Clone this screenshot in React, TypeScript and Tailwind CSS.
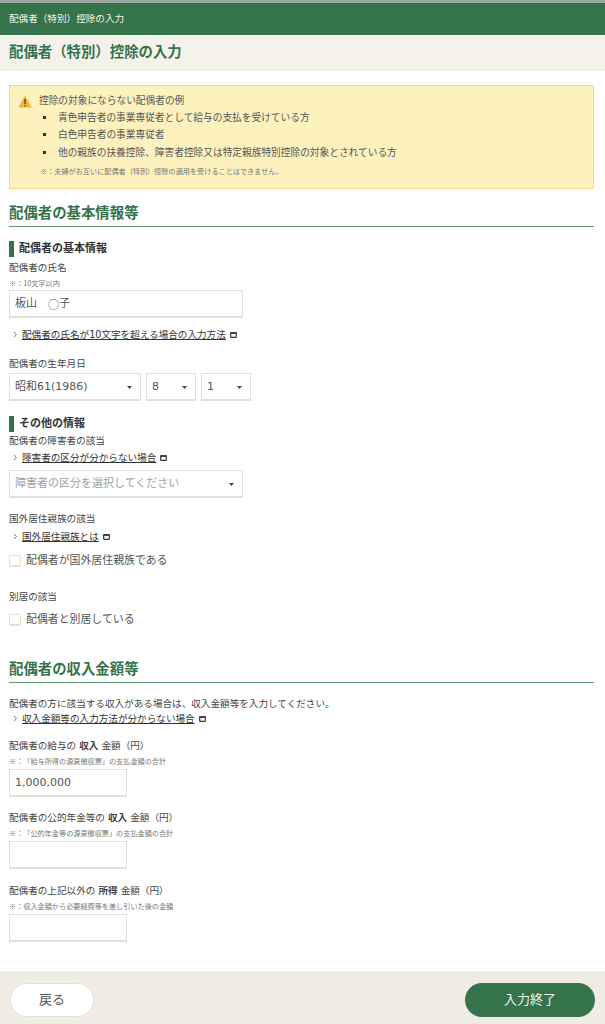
const FONT = "font-['DejaVu_Sans','Noto_Sans_CJK_JP',sans-serif]";

function ExternalIcon() {
  return (
    <svg width="7" height="6" viewBox="0 0 7 6" className="ml-[4px] inline-block">
      <rect x="0.7" y="0.9" width="5.6" height="4.4" rx="0.6" fill="none" stroke="#333" strokeWidth="1.2" />
      <rect x="0.3" y="0.3" width="6.4" height="1.5" fill="#333" />
    </svg>
  );
}

function HelpLink({ text, className }: { text: string; className?: string }) {
  return (
    <div className={`flex items-center h-[13px] text-[9.6px] leading-[13px] text-[#333] ${className ?? ""}`}>
      <svg width="5" height="7" viewBox="0 0 5 7" className="ml-[4px] mr-[4px]">
        <path d="M1 1l2.5 2.5L1 6" fill="none" stroke="#666" strokeWidth="0.9" />
      </svg>
      <span className="underline">{text}</span>
      <ExternalIcon />
    </div>
  );
}

function SectionTitle({ text, className }: { text: string; className?: string }) {
  return (
    <h2 className={`h-[24px] border-b border-[#5f9a72] text-[14.4px] leading-[20px] font-bold text-[#35734a] ${className ?? ""}`}>
      {text}
    </h2>
  );
}

function SubTitle({ text, className }: { text: string; className?: string }) {
  return (
    <h3 className={`h-[16px] border-l-[5px] border-[#35734a] pl-[5px] text-[11px] leading-[16px] font-bold text-[#333] ${className ?? ""}`}>
      {text}
    </h3>
  );
}

function Label({ children, className }: { children: React.ReactNode; className?: string }) {
  return <div className={`h-[13px] text-[9.6px] leading-[13px] text-[#444] ${className ?? ""}`}>{children}</div>;
}

function Note({ text, className }: { text: string; className?: string }) {
  return (
    <div className={`h-[10px] font-['Noto_Sans_CJK_JP',sans-serif] text-[7.15px] leading-[10px] text-[#777] [text-spacing-trim:space-all] ${className ?? ""}`}>
      {text}
    </div>
  );
}

function Field({ value, className }: { value?: React.ReactNode; className?: string }) {
  return (
    <div className={`h-[28px] flex items-center border border-[#e3e0d8] border-b-2 bg-white pl-[5px] pt-[1px] text-[11px] text-[#555] ${className ?? ""}`}>
      {value}
    </div>
  );
}

function SelectBox({ value, muted, className }: { value: string; muted?: boolean; className?: string }) {
  return (
    <div className={`h-[28px] flex items-center justify-between border border-[#e3e0d8] border-b-2 bg-white pl-[5px] pr-[8px] pt-[1px] text-[11px] ${muted ? "text-[#a0a0a0]" : "text-[#555]"} ${className ?? ""}`}>
      <span>{value}</span>
      <svg width="5" height="3" viewBox="0 0 5 3">
        <path d="M0 0h5L2.5 3z" fill="#444" />
      </svg>
    </div>
  );
}

function CheckRow({ text, className }: { text: string; className?: string }) {
  return (
    <div className={`flex items-center h-[14px] text-[10.9px] text-[#555] ${className ?? ""}`}>
      <span className="w-[12px] h-[12px] mr-[5px] rounded-[2px] border border-[#e3e0d8] border-b-2 bg-white" />
      {text}
    </div>
  );
}

const EXCLUDED = [
  "青色申告者の事業専従者として給与の支払を受けている方",
  "白色申告者の事業専従者",
  "他の親族の扶養控除、障害者控除又は特定親族特別控除の対象とされている方",
];

export default function App() {
  return (
    <div className={`w-[605px] h-[1024px] overflow-hidden flex flex-col bg-white ${FONT}`}>
      <div className="h-[3px] bg-[#9aa89f]" />
      <div className="h-[32px] pl-[9px] flex items-center bg-[#35734a] text-[9.6px] text-[#f2f2ec]">配偶者（特別）控除の入力</div>
      <div className="h-[36px] pl-[9px] flex items-center bg-[#f5f2eb] text-[14.4px] font-bold text-[#35734a]">配偶者（特別）控除の入力</div>

      <main className="flex-1 pl-[9px] pr-[11px]">
        <div className="mt-[14px] h-[104px] border border-[#fbd67f] bg-[#fdf1bd] pt-[7px] pl-[8px] text-[9.7px] leading-[17.3px] text-[#555]">
          <div className="flex items-center h-[16px]">
            <svg width="14" height="13" viewBox="0 0 14 13" className="mr-[7px]">
              <path d="M7 0.5L13.7 12.5H0.3z" fill="#f2b33d" />
              <rect x="6.3" y="4" width="1.4" height="5" fill="#5a4a1a" />
              <rect x="6.3" y="10" width="1.4" height="1.4" fill="#5a4a1a" />
            </svg>
            控除の対象にならない配偶者の例
          </div>
          <ul className="ml-[25px]">
            {EXCLUDED.map((item) => (
              <li key={item} className="flex items-center">
                <span className="w-[3px] h-[3px] mr-[12px] bg-[#333]" />
                {item}
              </li>
            ))}
          </ul>
          <div className="ml-[22px] mt-[5px] font-['Noto_Sans_CJK_JP',sans-serif] text-[7.15px] leading-[10px] text-[#777]">※：夫婦がお互いに配偶者（特別）控除の適用を受けることはできません。</div>
        </div>

        <SectionTitle text="配偶者の基本情報等" className="mt-[14px]" />

        <SubTitle text="配偶者の基本情報" className="mt-[14px]" />
        <Label className="mt-[4px]">配偶者の氏名</Label>
        <Note text="※：10文字以内" className="mt-[4px]" />
        <Field
          value={<>板山　<span className="font-['Noto_Sans_CJK_JP',sans-serif]">○</span>子</>}
          className="mt-[2px] w-[234px]"
        />
        <HelpLink text="配偶者の氏名が10文字を超える場合の入力方法" className="mt-[10px]" />
        <Label className="mt-[16px]">配偶者の生年月日</Label>
        <div className="mt-[3px] flex gap-[5px]">
          <SelectBox value="昭和61(1986)" className="w-[132px]" />
          <SelectBox value="8" className="w-[50px]" />
          <SelectBox value="1" className="w-[50px]" />
        </div>

        <SubTitle text="その他の情報" className="mt-[15px]" />
        <Label className="mt-[2px]">配偶者の障害者の該当</Label>
        <HelpLink text="障害者の区分が分からない場合" className="mt-[4px]" />
        <SelectBox value="障害者の区分を選択してください" muted className="mt-[6px] w-[234px]" />
        <Label className="mt-[14px]">国外居住親族の該当</Label>
        <HelpLink text="国外居住親族とは" className="mt-[5px]" />
        <CheckRow text="配偶者が国外居住親族である" className="mt-[11px]" />
        <Label className="mt-[22px]">別居の該当</Label>
        <CheckRow text="配偶者と別居している" className="mt-[10px]" />

        <SectionTitle text="配偶者の収入金額等" className="mt-[32px]" />
        <Label className="mt-[14px]">配偶者の方に該当する収入がある場合は、収入金額等を入力してください。</Label>
        <HelpLink text="収入金額等の入力方法が分からない場合" className="mt-[2px]" />

        <Label className="mt-[14px]">配偶者の給与の <b>収入</b> 金額（円）</Label>
        <Note text="※：「給与所得の源泉徴収票」の支払金額の合計" className="mt-[4px]" />
        <Field value="1,000,000" className="mt-[3px] w-[118px]" />

        <Label className="mt-[14px]">配偶者の公的年金等の <b>収入</b> 金額（円）</Label>
        <Note text="※：「公的年金等の源泉徴収票」の支払金額の合計" className="mt-[4px]" />
        <Field className="mt-[3px] w-[118px]" />

        <Label className="mt-[15px]">配偶者の上記以外の <b>所得</b> 金額（円）</Label>
        <Note text="※：収入金額から必要経費等を差し引いた後の金額" className="mt-[4px]" />
        <Field className="mt-[3px] w-[118px]" />
      </main>

      <footer className="h-[53px] pt-[12px] px-[10px] flex items-start justify-between bg-[#efece4]">
        <button className="w-[84px] h-[34px] rounded-full border border-[#e3e0d8] bg-white text-[13px] text-[#555]">戻る</button>
        <button className="w-[130px] h-[34px] rounded-full bg-[#35734a] text-[13px] text-[#f2f2ec]">入力終了</button>
      </footer>
    </div>
  );
}
